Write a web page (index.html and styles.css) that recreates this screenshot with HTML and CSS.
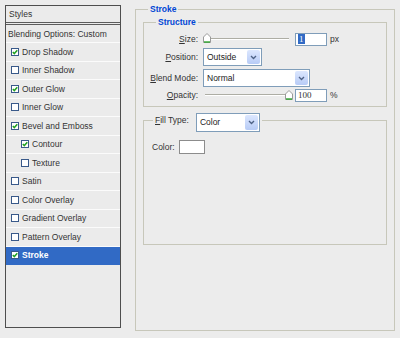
FILE: index.html
```
<!DOCTYPE html>
<html lang="en">
<head>
	<meta charset="UTF-8">
	<title>Layer Style - Stroke</title>
	<link rel="stylesheet" href="styles.css">
</head>
<body>
<div class="dialog">
	<div class="styles-list">
		<div class="list-head">Styles</div>
		<div class="list-row blend">Blending Options: Custom</div>
		<div class="list-row"><span class="cb"><svg viewBox="0 0 6 6"><polyline points="0.8,3 2.3,4.6 5.3,1.2"/></svg></span>Drop Shadow</div>
		<div class="list-row"><span class="cb"></span>Inner Shadow</div>
		<div class="list-row"><span class="cb"><svg viewBox="0 0 6 6"><polyline points="0.8,3 2.3,4.6 5.3,1.2"/></svg></span>Outer Glow</div>
		<div class="list-row"><span class="cb"></span>Inner Glow</div>
		<div class="list-row"><span class="cb"><svg viewBox="0 0 6 6"><polyline points="0.8,3 2.3,4.6 5.3,1.2"/></svg></span>Bevel and Emboss</div>
		<div class="list-row sub"><span class="cb"><svg viewBox="0 0 6 6"><polyline points="0.8,3 2.3,4.6 5.3,1.2"/></svg></span>Contour</div>
		<div class="list-row sub"><span class="cb"></span>Texture</div>
		<div class="list-row"><span class="cb"></span>Satin</div>
		<div class="list-row"><span class="cb"></span>Color Overlay</div>
		<div class="list-row"><span class="cb"></span>Gradient Overlay</div>
		<div class="list-row"><span class="cb"></span>Pattern Overlay</div>
		<div class="list-row current"><span class="cb"><svg viewBox="0 0 6 6"><polyline points="0.8,3 2.3,4.6 5.3,1.2"/></svg></span>Stroke</div>
	</div>

	<fieldset class="group main">
		<legend>Stroke</legend>

		<fieldset class="group structure">
			<legend>Structure</legend>
			<div class="field size">
				<label><u>S</u>ize:</label>
				<div class="slider">
					<span class="thumb"><svg viewBox="0 0 8 10"><path d="M0.5 9.5 V4 L4 0.5 L7.5 4 V9.5 Z" fill="#fff" stroke="#9a9a9a"/><path d="M1 9 H7" stroke="#2fa52f" stroke-width="1.4"/></svg></span>
				</div>
				<span class="num"><span class="hl">1</span></span>
				<span class="unit">px</span>
			</div>
			<div class="field position">
				<label><u>P</u>osition:</label>
				<div class="select w-pos"><span class="val">Outside</span><span class="btn"><svg viewBox="0 0 8 6"><path d="M1 1.2 L4 4.2 L7 1.2"/></svg></span></div>
			</div>
			<div class="field mode">
				<label><u>B</u>lend Mode:</label>
				<div class="select w-mode"><span class="val">Normal</span><span class="btn"><svg viewBox="0 0 8 6"><path d="M1 1.2 L4 4.2 L7 1.2"/></svg></span></div>
			</div>
			<div class="field opacity">
				<label><u>O</u>pacity:</label>
				<div class="slider">
					<span class="thumb end"><svg viewBox="0 0 8 10"><path d="M0.5 9.5 V4 L4 0.5 L7.5 4 V9.5 Z" fill="#fff" stroke="#9a9a9a"/><path d="M1 9 H7" stroke="#2fa52f" stroke-width="1.4"/></svg></span>
				</div>
				<span class="num">100</span>
				<span class="unit">%</span>
			</div>
		</fieldset>

		<fieldset class="group fill">
			<legend>
				<label><u>F</u>ill Type:</label>
				<div class="select w-fill"><span class="val">Color</span><span class="btn"><svg viewBox="0 0 8 6"><path d="M1 1.2 L4 4.2 L7 1.2"/></svg></span></div>
			</legend>
			<div class="color-row">
				<label>Color:</label>
				<span class="swatch"></span>
			</div>
		</fieldset>
	</fieldset>
</div>
</body>
</html>
```

FILE: styles.css
```
* {
	margin: 0;
	padding: 0;
}

body {
	background: #ececec;
	font-family: "Liberation Sans", Arial, sans-serif;
	font-size: 8.5px;
	color: #333;
}

.dialog {
	width: 400px;
	height: 338px;
	display: flex;
	align-items: flex-start;
	padding: 4px 0 0 5px;
	box-sizing: border-box;
}

/* left list */
.styles-list {
	width: 116px;
	height: 323px;
	margin-top: 1px;
	box-sizing: border-box;
	border: 1px solid #4e4e4e;
	background: #ebebeb;
}

.list-head {
	height: 16px;
	line-height: 16px;
	padding-left: 3px;
	border-bottom: 3px double #5c5c5c;
}

.list-row {
	height: 18.5px;
	box-sizing: border-box;
	border-bottom: 1px solid #fbfbfb;
	display: flex;
	align-items: center;
	padding-left: 5px;
	white-space: nowrap;
}

.list-row.blend {
	height: 18px;
	padding-left: 2px;
}

.list-row.sub {
	padding-left: 15px;
}

.list-row.current {
	background: #316ac5;
	color: #fff;
	font-weight: bold;
	border-bottom-color: #316ac5;
}

.cb {
	width: 8px;
	height: 8px;
	box-sizing: border-box;
	border: 1px solid #39598a;
	background: #fff;
	margin-right: 3px;
	flex: none;
	display: flex;
}

.cb svg {
	width: 6px;
	height: 6px;
}

.cb polyline {
	fill: none;
	stroke: #21a121;
	stroke-width: 1.5;
}

/* group boxes */
fieldset.group {
	border: 1px solid #c7c7ba;
	min-width: 0;
}

fieldset.group > legend {
	line-height: 10px;
	font-weight: bold;
	color: #0046d5;
	padding: 0 2px;
}

.main {
	width: 260px;
	height: 327px;
	box-sizing: border-box;
	margin-left: 14px;
	padding: 0 7px;
}

.main > legend {
	margin-left: 5px;
}

.structure {
	margin-top: 3px;
	padding-bottom: 4px;
}

.structure > legend {
	margin-left: 12px;
}

.field {
	display: flex;
	align-items: center;
}

.field label {
	width: 54px;
	text-align: right;
	margin-right: 5px;
	flex: none;
}

.field.size {
	height: 16px;
	margin-top: 4px;
}

.field.position {
	margin-top: 1px;
}

.field.mode {
	margin-top: 3px;
}

.field.opacity {
	height: 14px;
	margin-top: 1px;
}

.slider {
	position: relative;
	width: 86px;
	height: 100%;
}

.slider:before {
	content: "";
	position: absolute;
	left: 2px;
	right: 0;
	top: 7px;
	height: 0;
	border-top: 1px solid #adada4;
	border-bottom: 1px solid #fff;
}

.opacity .slider:before {
	top: 6px;
}

.thumb {
	position: absolute;
	left: 0;
	top: 2px;
	width: 8px;
	height: 10px;
}

.thumb svg {
	display: block;
	width: 8px;
	height: 10px;
}

.thumb.end {
	left: 82px;
}

.num {
	width: 32px;
	height: 13px;
	box-sizing: border-box;
	border: 1px solid #7f9db9;
	background: #fff;
	margin-left: 6px;
	padding-left: 2px;
	line-height: 11px;
	font-family: "Liberation Serif", serif;
	font-size: 9px;
}

.hl {
	background: #316ac5;
	color: #fff;
	padding: 0 1px;
}

.unit {
	margin-left: 3px;
}

/* combo boxes */
.select {
	display: flex;
	height: 18px;
	box-sizing: border-box;
	border: 1px solid #7f9db9;
	background: #fff;
	color: #222;
}

.select .val {
	flex: 1;
	padding-left: 3px;
	line-height: 16px;
}

.select .btn {
	width: 13px;
	margin: 1px;
	border-radius: 2px;
	background: linear-gradient(#dce7fe, #b7cbf6);
	display: flex;
	align-items: center;
	justify-content: center;
}

.select .btn svg {
	width: 7px;
	height: 5px;
}

.select .btn path {
	fill: none;
	stroke: #4d6185;
	stroke-width: 1.6;
}

.w-pos {
	width: 59px;
}

.w-mode {
	width: 107px;
}

.w-fill {
	width: 64px;
	height: 19px;
	margin: -1px 0 -5px 7px;
}

/* fill type */
.fill {
	margin-top: 7px;
	height: 131px;
	box-sizing: border-box;
}

fieldset.fill > legend {
	margin-left: 9px;
	display: flex;
	align-items: flex-start;
	font-weight: normal;
	color: #333;
}

.fill > legend label {
	line-height: 13px;
}

.color-row {
	display: flex;
	align-items: center;
	margin-top: 13px;
	padding-left: 8px;
}

.color-row label {
	width: 27px;
}

.swatch {
	width: 26px;
	height: 14px;
	box-sizing: border-box;
	border: 1px solid #8c8c8c;
	background: #fff;
}
```
